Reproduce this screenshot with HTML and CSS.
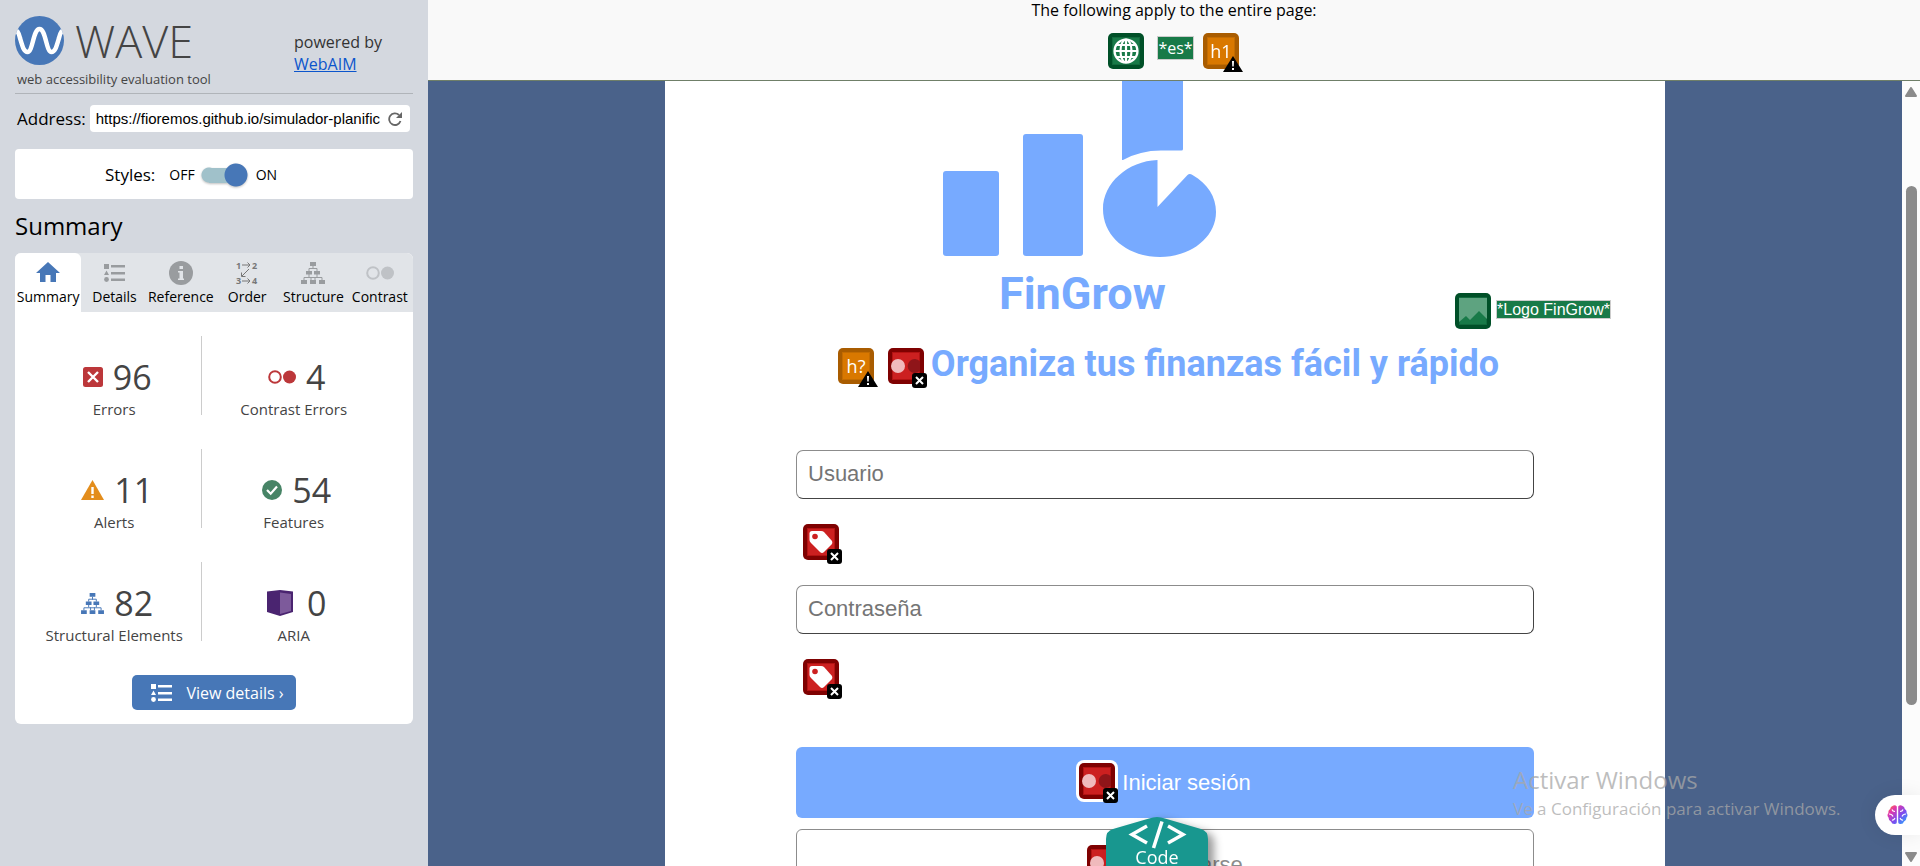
FILE: index.html
```html
<!DOCTYPE html>
<html lang="es">
<head>
<meta charset="utf-8">
<title>WAVE Report</title>
<link rel="stylesheet" href="styles.css">
</head>
<body>
<svg class="defs" aria-hidden="true">
  <defs>
    <symbol id="list" viewBox="0 0 21 20">
      <path d="M0 1h5v5H0zM7 2h14v2.500H7zM2.500 7.500 5 12H0zM7 9h14v2.500H7zM7 15.500h14V18H7z"/><circle cx="2.500" cy="16.500" r="2.400"/>
    </symbol>
    <symbol id="tree" viewBox="0 0 24 22">
      <path d="M9 0h6v4H9zM5 9h6v3.500H5zM13 9h6v3.500h-6zM0 18h6v4H0zM9 18h6v4H9zM18 18h6v4h-6z"/>
      <path d="M12 4v3M8 9V6.500h8V9M8 12v3M16 12v3M3 18v-2.500h18V18M10 18v-3M14 18v-3" fill="none" stroke="currentColor"/>
    </symbol>
    <symbol id="circles" viewBox="0 0 28 14">
      <circle cx="7" cy="7" r="5.800" fill="none" stroke="currentColor" stroke-width="2"/><circle cx="21.500" cy="7" r="6.500"/>
    </symbol>
    <symbol id="errbadge" viewBox="0 0 15 15">
      <rect width="15" height="15" rx="3" fill="#000"/><path d="m4 4 7 7M11 4l-7 7" stroke="#fff" stroke-width="2"/>
    </symbol>
    <symbol id="alertbadge" viewBox="0 0 20 16">
      <path d="M10 0 20 16H0z" fill="#000"/><path d="M9 5h2l-.3 5.500H9.300zM9 12h2v2H9z" fill="#fff"/>
    </symbol>
    <symbol id="contrast" viewBox="0 0 40 40">
      <rect width="36" height="36" rx="5" fill="#7f0101"/><rect x="4.500" y="4.500" width="27" height="27" fill="#cc2020" stroke="#b31212"/>
      <circle cx="10" cy="18" r="7" fill="#f0babc"/><path d="M32 13.500a7 7 0 1 0 0 9z" fill="#8f1519"/>
      <use href="#errbadge" x="24" y="25" width="15" height="15"/>
    </symbol>
    <symbol id="tag" viewBox="0 0 40 40">
      <rect width="36" height="36" rx="5" fill="#7f0101"/><rect x="4.500" y="4.500" width="27" height="27" fill="#cc2020" stroke="#b31212"/>
      <path d="M9 7h9q2 0 3 1l8 9q1 2-.5 3.500L21 28q-2 2-4 0l-9-9q-1.500-1.500-1.500-3V9.500Q6.500 7 9 7z" fill="#fff"/><circle cx="12" cy="12.500" r="2.800" fill="#cc2020"/>
      <use href="#errbadge" x="24" y="25" width="15" height="15"/>
    </symbol>
    <linearGradient id="brainfill" x1="0" y1="0" x2="1" y2="1">
      <stop offset="0" stop-color="#ff8a1f"/><stop offset=".25" stop-color="#e435a8"/><stop offset=".6" stop-color="#7a4df0"/><stop offset="1" stop-color="#20b4ff"/>
    </linearGradient>
  </defs>
</svg>

<div class="app">
  <aside class="sidebar">
    <header class="brand">
      <div>
        <div class="brand-row">
          <svg width="49" height="49" viewBox="0 0 49 49" aria-hidden="true">
            <defs><clipPath id="disc"><circle cx="24.500" cy="24.500" r="24.500"/></clipPath></defs>
            <circle cx="24.500" cy="24.500" r="24.500" fill="#4777b7"/>
            <path clip-path="url(#disc)" d="M-1 14Q3 13 5 22C8 32 9 36 12.500 36C18 36 18 13 24.500 13S31 36 36.500 36C40 36 41 32 44 22Q46 13 50 14" fill="none" stroke="#fff" stroke-width="4.500"/>
          </svg>
          <h1 class="brand-name">WAVE</h1>
        </div>
        <p class="tagline">web accessibility evaluation tool</p>
      </div>
      <p class="powered">powered by<br><a href="#">WebAIM</a></p>
    </header>

    <form class="address">
      <label for="url">Address:</label>
      <div class="address-box">
        <input id="url" type="text" value="https://fioremos.github.io/simulador-planific">
        <button type="button" class="reload" aria-label="Reload">
          <svg width="14" height="14" viewBox="0 0 14 14"><path d="M12.500 9A5.800 5.800 0 1 1 11 3" fill="none" stroke="#666" stroke-width="1.800"/><path d="M14 0v6H8z" fill="#666"/></svg>
        </button>
      </div>
    </form>

    <div class="styles-box">
      <span class="styles-title">Styles:</span>
      <label class="switch"><span>OFF</span><input type="checkbox" class="toggle" checked><span>ON</span></label>
    </div>

    <h2 class="section-title">Summary</h2>

    <section class="panel">
      <nav class="tabs">
        <button class="tab active"><svg class="home" width="24" height="20" viewBox="0 0 24 20"><path d="M12 0 24 11h-4v9h-5.500v-7h-5v7H4v-9H0z" fill="#4777b7"/></svg>Summary</button>
        <button class="tab"><svg width="21" height="20"><use href="#list"/></svg>Details</button>
        <button class="tab"><svg width="24" height="24" viewBox="0 0 24 24"><circle cx="12" cy="12" r="12"/><path d="M10.500 5h3.500v3h-3.500zM9 10h5v7.500h1V19H9v-1.500h1.500v-6H9z" fill="#e1e4e8"/></svg>Reference</button>
        <button class="tab"><svg class="order" width="22" height="24" viewBox="0 0 22 24"><g class="order-digits"><text x="0" y="8">1</text><text x="16" y="8">2</text><text x="0" y="23">3</text><text x="16" y="23">4</text></g><path d="M6 4h8M11.500 1.500 14 4l-2.500 2.500M6 20h8M11.500 17.500 14 20l-2.500 2.500M13 8l-7 7M5.500 11.500V15.500h4" fill="none" stroke="#777"/></svg>Order</button>
        <button class="tab"><svg width="24" height="22"><use href="#tree"/></svg>Structure</button>
        <button class="tab"><svg class="pale" width="28" height="24"><use href="#circles"/></svg>Contrast</button>
      </nav>

      <ul class="stats">
        <li class="stat"><div class="figure"><svg width="20" height="20" viewBox="0 0 20 20"><rect width="20" height="20" rx="2.500" fill="#bc373a"/><path d="m5 5 10 10M15 5 5 15" stroke="#fff" stroke-width="2.400"/></svg>96</div><p>Errors</p></li>
        <li class="stat"><div class="figure"><svg class="red" width="28" height="14"><use href="#circles"/></svg>4</div><p>Contrast Errors</p></li>
        <li class="stat"><div class="figure"><svg width="23" height="20" viewBox="0 0 23 20"><path d="M11.500 0 23 20H0z" fill="#e38d1c"/><path d="M10.300 7h2.400v7h-2.400zM10.300 15.500h2.400V18h-2.400z" fill="#fff"/></svg>11</div><p>Alerts</p></li>
        <li class="stat"><div class="figure"><svg width="20" height="20" viewBox="0 0 20 20"><circle cx="10" cy="10" r="10" fill="#478466"/><path d="m5 10 3.700 3.700L15 6.500" fill="none" stroke="#fff" stroke-width="2.200"/></svg>54</div><p>Features</p></li>
        <li class="stat"><div class="figure"><svg class="blue" width="23" height="21"><use href="#tree"/></svg>82</div><p>Structural Elements</p></li>
        <li class="stat"><div class="figure wide"><svg width="26" height="26" viewBox="0 0 26 26"><path d="M0 1.500 13 0l13 1.500V22l-13 4L0 22z" fill="#4a2470"/><path d="m13 2.500 11 1.500v17L13 24z" fill="#7d5a9b"/></svg>0</div><p>ARIA</p></li>
      </ul>

      <button class="details-btn"><svg width="21" height="20"><use href="#list"/></svg>View details ›</button>
    </section>
  </aside>

  <main class="report">
    <header class="page-items">
      <p>The following apply to the entire page:</p>
      <div class="page-icons">
        <svg class="mark halo" width="40" height="40" viewBox="0 0 40 40"><rect width="36" height="36" rx="5" fill="#005028"/><rect x="4.500" y="4.500" width="27" height="27" fill="#187a48" stroke="#116b3d"/><g fill="none" stroke="#fff" stroke-width="2.200"><circle cx="18" cy="18" r="11.500"/><ellipse cx="18" cy="18" rx="5.500" ry="11.500"/><path d="M18 6v24M6.500 18h23M8.500 12h19M8.500 24h19"/></g></svg>
        <span class="chip lang">*es*</span>
        <svg class="mark halo" width="40" height="40" viewBox="0 0 40 40"><rect width="36" height="36" rx="5" fill="#a95c00"/><rect x="4.500" y="4.500" width="27" height="27" fill="#d97800" stroke="#c46c00"/><text class="mark-text" x="18" y="25" text-anchor="middle">h1</text><use href="#alertbadge" x="20" y="23" width="20" height="16"/></svg>
      </div>
    </header>

    <div class="pane">
      <div class="viewport">
        <article class="site">
          <div class="logo-row">
            <svg class="logo" width="640" height="252" viewBox="0 0 640 252" role="img" aria-label="Logo FinGrow">
              <g fill="#77aaff">
                <rect x="128" y="90" width="56" height="85" rx="3"/>
                <rect x="208" y="53" width="60" height="122" rx="3"/>
                <path d="M307 0h61v68q0 1.500-1.500 1.500H346Q325 69.500 308 79h-1z"/>
                <path d="M342.500 79v47l30-32q2-2 5 0C393 103 401 116 401 131c0 26-26 45-56 45-32 0-57-20-57-48 0-26 25-48 54.500-49z"/>
                <text class="logo-text" x="184" y="228">FinGrow</text>
              </g>
            </svg>
            <svg class="mark" width="40" height="40" viewBox="0 0 40 40"><rect width="36" height="36" rx="5" fill="#005028"/><rect x="4.500" y="4.500" width="27" height="27" fill="#187a48" stroke="#116b3d"/><path d="M4 5h28v21l-8-8-9 9-4-4-7 6z" fill="#5ea380"/></svg>
            <span class="chip alt">*Logo FinGrow*</span>
          </div>
          <div class="headline">
            <svg class="mark" width="40" height="40" viewBox="0 0 40 40"><rect width="36" height="36" rx="5" fill="#a95c00"/><rect x="4.500" y="4.500" width="27" height="27" fill="#d97800" stroke="#c46c00"/><text class="mark-text" x="18" y="25" text-anchor="middle">h?</text><use href="#alertbadge" x="20" y="23" width="20" height="16"/></svg>
            <svg class="mark" width="40" height="40"><use href="#contrast"/></svg>
            <h2>Organiza tus finanzas fácil y rápido</h2>
          </div>
          <form class="login">
            <input type="text" placeholder="Usuario" aria-label="Usuario">
            <svg class="mark field-mark" width="40" height="40"><use href="#tag"/></svg>
            <input type="password" placeholder="Contraseña" aria-label="Contraseña">
            <svg class="mark field-mark" width="40" height="40"><use href="#tag"/></svg>
            <button type="button" class="btn primary"><svg class="mark" width="40" height="40"><rect x="-3" y="-3" width="42" height="42" rx="8" fill="#fff"/><use href="#contrast"/></svg>Iniciar sesión</button>
            <button type="button" class="btn secondary"><svg class="mark" width="40" height="40"><use href="#contrast"/></svg>Registrarse</button>
          </form>
        </article>
      </div>
      <div class="scrollbar" aria-hidden="true">
        <svg width="12" height="10" viewBox="0 0 12 10"><path d="M6 1 11 9H1z" fill="#8b8b8b" stroke="#8b8b8b" stroke-width="2" stroke-linejoin="round"/></svg>
        <div class="track"><div class="thumb"></div></div>
        <svg width="12" height="10" viewBox="0 0 12 10"><path d="M1 1h10L6 9z" fill="#8b8b8b" stroke="#8b8b8b" stroke-width="2" stroke-linejoin="round"/></svg>
      </div>
    </div>

    <button class="code-tab">
      <svg class="code-shape" width="102" height="60" viewBox="0 0 102 60" aria-hidden="true"><path d="M0 60V22q0-8 7-10L43 1.500q8-3 16 0L95 12q7 2 7 10v38z" fill="#18978f"/><path d="M41 9 26 17.500 41 26M56 4.500 47.500 31M62 9l15 8.500L62 26" fill="none" stroke="#fff" stroke-width="3.500"/></svg>
      <span>Code</span>
    </button>
    <div class="watermark"><p class="wm-title">Activar Windows</p><p class="wm-text">Ve a Configuración para activar Windows.</p></div>
    <button class="assistant" aria-label="Assistant">
      <svg width="21" height="20" viewBox="0 0 21 20"><path d="M9.800 1.500Q8-.5 5.500 1 3.500 1.500 3.200 4 .8 5.500 1.500 8-.5 10 1.500 12.500q0 3 2.500 4Q5 19.500 8 19q1.800 0 1.800-1.800zM11.200 1.500Q13-.5 15.500 1q2 .5 2.300 3 2.400 1.500 1.700 4 2 2 0 4.500 0 3-2.500 4-1 3-4 2.500-1.800 0-1.800-1.800z" fill="url(#brainfill)"/><path d="M2 9q3 0 4 2.500M5 4.500q.5 2 3 2M5 15q2 .5 3-2M19 9q-3 0-4 2.500M16 4.500q-.5 2-3 2M16 15q-2 .5-3-2" fill="none" stroke="#fff" stroke-width="1.100"/></svg>
    </button>
  </main>
</div>
</body>
</html>
```

FILE: styles.css
```css
* { box-sizing: border-box; }
body { margin: 0; font-family: "Open Sans", "Noto Sans", sans-serif; font-size: 16px; color: #000; }
h1, h2, p, ul { margin: 0; padding: 0; font-weight: 400; }
ul { list-style: none; }
button { font: inherit; border: 0; background: none; padding: 0; cursor: pointer; }
svg { display: block; flex: none; }
.defs { position: absolute; width: 0; height: 0; }
.app { display: flex; height: 100vh; overflow: hidden; }

/* Sidebar */
.sidebar { flex: none; width: 428px; padding: 16px 15px; background: #d4d8df; }
.brand { display: flex; border-bottom: 1px solid #b0b4b9; height: 78px; }
.brand-row { display: flex; height: 49px; gap: 11px; align-items: center; }
.brand-name { font-size: 45px; line-height: 49px; font-weight: 300; color: #444; }
.tagline { padding-left: 2px; font-size: 13px; line-height: 28px; color: #444; }
.powered { margin: 15px 0 0 auto; width: 119px; font-size: 16px; line-height: 22px; color: #333; }
.powered a { color: #0b55cc; }
.address { display: flex; align-items: center; gap: 4px; margin-top: 11px; padding: 0 3px 0 2px; font-size: 17px; line-height: 25px; }
.address-box { flex: 1; display: flex; align-items: center; height: 27px; padding: 0 8px 0 6px; background: #fff; border-radius: 4px; }
.address input { flex: 1; min-width: 0; border: 0; padding: 0; font: 15px "Liberation Sans", Arial, sans-serif; background: none; }
.styles-box { display: flex; align-items: center; height: 50px; margin-top: 17px; padding-left: 90px; gap: 14px; background: #fff; border-radius: 4px; }
.styles-title { font-size: 17px; }
.switch { display: flex; align-items: center; gap: 6px; font-size: 14px; }
.toggle { appearance: none; width: 47px; height: 24px; margin: 1px 2px 0 0; border-radius: 12px;
  background: radial-gradient(circle at 35px 12px, #4777b7 11px, transparent 12px), linear-gradient(#a0c1ca, #a0c1ca) 8px 5px / 28px 15px no-repeat, radial-gradient(circle at 8px 12px, #a0c1ca 7px, transparent 8px);
  filter: drop-shadow(0 1px 1px rgba(0, 0, 0, .25)); }
.section-title { margin: 10px 0 11px; font-size: 24px; line-height: 33px; }
.panel { background: #fff; border-radius: 6px; padding-bottom: 14px; }
.tabs { display: grid; grid-template-columns: repeat(6, 1fr); height: 59px; background: #e1e4e8; border-radius: 6px 6px 0 0; }
.tab { display: flex; flex-direction: column; align-items: center; gap: 2px; padding-top: 8px; font-size: 14px; line-height: 20px; color: #000; }
.tab svg { height: 24px; fill: #999c9f; color: #999c9f; }
.tab .home { height: 20px; margin: 1px 0 3px; }
.tab .pale { fill: #bfc2c6; color: #bfc2c6; }
.tab .order { overflow: visible; }
.tab.active { background: #fff; border-radius: 6px 6px 0 0; }
.order-digits { font: 700 9px "Open Sans", sans-serif; fill: #777; }
.stats { display: grid; grid-template-columns: 49fr 51fr; row-gap: 34px; padding: 24px 28px 34px 12px; color: #444; }
.stat { display: flex; flex-direction: column; align-items: center; height: 79px; padding-top: 22px; }
.stat:nth-child(odd) { border-right: 1px solid #ccc; }
.stat p { font-size: 15px; line-height: 20px; margin-top: 3px; }
.figure { display: flex; align-items: center; gap: 10px; padding-left: 6px; font-size: 34px; line-height: 38px; }
.figure.wide { gap: 14px; }
.red { fill: #bc373a; color: #bc373a; }
.blue { fill: #4777b7; color: #4777b7; }
.details-btn { display: flex; align-items: center; gap: 14px; margin: 0 auto; padding: 0 12px 0 19px; height: 35px; border-radius: 5px; background: #4777b7; color: #fff; fill: #fff; font-size: 16px; }

/* Report */
.report { position: relative; flex: 1; min-width: 0; display: flex; flex-direction: column; }
.page-items { flex: none; height: 81px; background: #f9f9f9; border-bottom: 1px solid #6f7f68; text-align: center; }
.page-items p { line-height: 20px; font-size: 16px; }
.page-icons { display: flex; justify-content: center; gap: 9px; margin-top: 13px; padding-left: 3px; }
.mark { overflow: visible; }
.halo { filter: drop-shadow(0 0 1px #fff); }
.mark-text { font: 18px "Open Sans", sans-serif; fill: #fff; }
.chip { background: #187a48; color: #fff; border: 1px solid #ccc; }
.lang { height: 24px; margin: 3px 0 0; font-size: 16px; line-height: 22px; }
.pane { flex: 1; min-height: 0; display: flex; }
.viewport { flex: 1; min-width: 0; overflow: hidden; background: #4a628a; }
.site { width: 1000px; max-width: 100%; min-height: 100%; margin: 0 auto; background: #fff; }
.logo-row { display: flex; justify-content: flex-end; align-items: flex-end; padding-right: 54px; }
.logo-text { font: 700 45px Roboto, sans-serif; }
.alt { margin: 0 0 14px 1px; font: 16px/17px "Liberation Sans", Arial, sans-serif; }
.headline { display: flex; justify-content: center; gap: 10px; padding: 9px 0 0 7px; }
.headline .mark { margin-top: 6px; }
.headline h2 { margin-left: -7px; font: 700 36px/44px Roboto, sans-serif; color: #77aaff; }
.login { display: flex; flex-direction: column; padding: 62px 131px 0; }
.login input { height: 49px; padding: 0 11px 2px; border: 1px solid; border-color: #8c8c8c #444 #444 #8c8c8c; border-radius: 7px; font: 22px "Liberation Sans", Arial, sans-serif; }
.login input::placeholder { color: #757575; }
.field-mark { margin: 25px 0 21px 7px; }
.btn { display: flex; justify-content: center; align-items: center; gap: 3px; height: 71px; border-radius: 6px; font: 22px "Liberation Sans", Arial, sans-serif; }
.primary { margin-top: 27px; background: #77aaff; color: #fff; }
.secondary { margin-top: 11px; border: 1px solid #8c8c8c; color: #8c8c8c; }
.scrollbar { flex: none; width: 18px; display: flex; flex-direction: column; align-items: center; padding: 6px 0 4px; background: #fcfcfc; }
.track { flex: 1; width: 11px; padding-top: 89px; }
.thumb { height: 78%; border-radius: 6px; background: #8b8b8b; }

/* Overlays */
.code-tab { position: absolute; left: calc(50% - 68px); bottom: -11px; width: 102px; height: 60px; color: #fff; filter: drop-shadow(6px 4px 4px rgba(0, 0, 0, .4)); }
.code-shape { position: absolute; inset: 0; }
.code-tab span { position: relative; display: block; padding-top: 20px; font-size: 18px; line-height: 26px; }
.watermark { position: absolute; right: 80px; bottom: 45px; width: 327px; color: rgba(168, 168, 168, .75); pointer-events: none; white-space: nowrap; }
.wm-title { font-size: 24px; line-height: 34px; }
.wm-text { font-size: 17px; line-height: 24px; }
.assistant { position: absolute; right: 0; bottom: 31px; width: 45px; height: 40px; padding-left: 12px; border-radius: 20px 0 0 20px; background: #fff; box-shadow: 0 0 20px rgba(0, 0, 0, .08); }
```
